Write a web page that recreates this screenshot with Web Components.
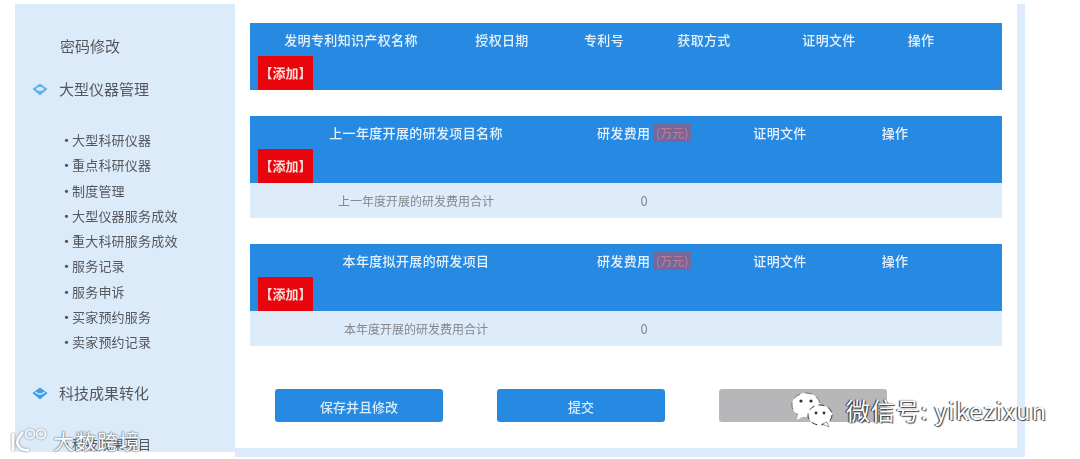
<!DOCTYPE html>
<html lang="zh">
<head>
<meta charset="utf-8">
<title>科研管理</title>
<style>
    html, body { margin: 0; height: 100%; background: #fff; overflow: hidden; }
    body { font-family: "Noto Sans CJK SC", "Noto Sans", sans-serif; }
</style>
</head>
<body>
<app-shell>
    <side-nav slot="nav"></side-nav>
    <data-table id="patents" columns="202px 100px 104px 96px 154px 30px"
        heads="发明专利知识产权名称|授权日期|专利号|获取方式|证明文件|操作"></data-table>
    <data-table id="lastYear" columns="332px 124px 148px 82px"
        heads="上一年度开展的研发项目名称|研发费用 (万元)|证明文件|操作"
        total="上一年度开展的研发费用合计|0"></data-table>
    <data-table id="thisYear" columns="332px 124px 148px 82px"
        heads="本年度拟开展的研发项目|研发费用 (万元)|证明文件|操作"
        total="本年度开展的研发费用合计|0"></data-table>
    <form-actions></form-actions>
</app-shell>
<water-marks></water-marks>

<script>
// Outer frame: sidebar on the left, white content panel with pale blue edge.
class AppShell extends HTMLElement {
    constructor() {
        super();
        this.attachShadow({ mode: "open" });
        this.shadowRoot.innerHTML = `
      <style>
        :host {
          display: grid;
          grid-template-columns: 220px 790px;
          width: 1010px;
          height: 453px;
          padding: 4px 0 0 15px;
        }
        .content {
          box-sizing: border-box;
          height: 453px;
          padding: 19px 15px 0 15px;
          border-right: 8px solid #deebfa;
          border-bottom: 9px solid #deebfa;
          background: #fff;
          display: flex;
          flex-direction: column;
          gap: 26px;
        }
      </style>
      <slot name="nav"></slot>
      <div class="content"><slot></slot></div>
    `;
    }
}

class SideNav extends HTMLElement {
    constructor() {
        super();
        this.attachShadow({ mode: "open" });
        const subItems = ["大型科研仪器", "重点科研仪器", "制度管理", "大型仪器服务成效", "重大科研服务成效",
            "服务记录", "服务申诉", "买家预约服务", "卖家预约记录"];
        const eye = (open) => `
          <svg viewBox="0 0 16 13" width="16" height="13" aria-hidden="true">
            <path d="M8 0.5 L15.5 6 L8 12.5 L0.5 6 Z" fill="${open ? "#5db3ea" : "#3f9fe2"}"/>
            ${open
                ? `<ellipse cx="8" cy="6" rx="3.6" ry="1.9" fill="#d5ecfa"/>`
                : `<path d="M3.5 5 Q8 9.5 12.5 5" fill="none" stroke="#d5ecfa" stroke-width="1.3"/>`}
          </svg>`;
        this.shadowRoot.innerHTML = `
      <style>
        :host {
          display: block;
          box-sizing: border-box;
          height: 448px;
          background: #dcebfa;
          overflow: hidden;
          padding-top: 31px;
          color: #55575c;
        }
        .top {
          display: flex;
          align-items: center;
          font-size: 15px;
          line-height: 22px;
          filter: blur(0.6px);
        }
        .top svg { margin-left: 17px; flex: none; }
        .top span { margin-left: 11px; }
        .top.plain span { margin-left: 45px; }
        .top.first { margin-top: 21px; }
        .top.second { margin-top: 28px; }
        ul {
          list-style: none;
          margin: 27px 0 0 0;
          padding: 0 0 0 45px;
          font-size: 13px;
          letter-spacing: 0.2px;
          line-height: 25.25px;
          filter: blur(0.6px);
        }
        li::before { content: "·"; display: inline-block; width: 12px; text-align: center; font-weight: 700; }
        ul.last { margin-top: 27px; }
      </style>
      <div class="top plain"><span>密码修改</span></div>
      <div class="top first">${eye(true)}<span>大型仪器管理</span></div>
      <ul>${subItems.map((t) => `<li>${t}</li>`).join("")}</ul>
      <div class="top second">${eye(false)}<span>科技成果转化</span></div>
      <ul class="last"><li>科技成果项目</li></ul>
    `;
    }
}

// A table head with an add button under it, and an optional total row.
class DataTable extends HTMLElement {
    constructor() {
        super();
        this.attachShadow({ mode: "open" });
    }

    connectedCallback() {
        this.render();
    }

    render() {
        const columns = this.getAttribute("columns");
        const heads = this.getAttribute("heads").split("|");
        const total = this.getAttribute("total");
        const headCell = (text) => {
            // The unit is marked like a selection in the source picture.
            const parts = text.split(" ");
            return parts.length > 1
                ? `<div>${parts[0]}<mark>${parts[1]}</mark></div>`
                : `<div>${text}</div>`;
        };
        this.shadowRoot.innerHTML = `
      <style>
        :host { display: block; }
        .grid { display: grid; grid-template-columns: ${columns}; text-align: center; }
        .head { background: #268ae2; height: 67px; }
        .titles {
          height: 33px;
          line-height: 34px;
          font-size: 13px;
          letter-spacing: 0.35px;
          font-weight: 500;
          color: #e6f1fb;
          filter: blur(0.6px);
          white-space: nowrap;
        }
        mark {
          background: #75689c;
          color: #bb7a92;
          font-size: 12px;
          letter-spacing: 0;
          margin-left: 3px;
          padding: 1px 2.5px;
        }
        .add {
          margin-left: 8px;
          width: 55px;
          height: 34px;
          background: #e8060c;
          color: #fbdcd8;
          font-size: 13px;
          line-height: 34px;
          text-align: center;
          font-weight: 700;
          white-space: nowrap;
        }
        .add span { display: block; filter: blur(0.5px); }
        .total {
          height: 35px;
          line-height: 35px;
          background: #deebfa;
          color: #85878b;
          font-size: 12px;
          filter: blur(0.5px);
        }
        .total div + div { font-size: 13px; }
      </style>
      <div class="head">
        <div class="grid titles">${heads.map(headCell).join("")}</div>
        <div class="add"><span>【添加】</span></div>
      </div>
      ${total ? `<div class="grid total">${total.split("|").map((t) => `<div>${t}</div>`).join("")}</div>` : ""}
    `;
    }
}

class FormActions extends HTMLElement {
    constructor() {
        super();
        this.attachShadow({ mode: "open" });
        this.shadowRoot.innerHTML = `
      <style>
        :host {
          display: flex;
          gap: 54px;
          margin: 17px 0 0 25px;
        }
        div {
          width: 168px;
          height: 33px;
          border-radius: 3px;
          background: #268ae2;
          color: #dcebfa;
          font-size: 13px;
          font-weight: 500;
          line-height: 35px;
          text-align: center;
        }
        span { filter: blur(0.6px); display: block; }
        .off { background: #b7b7b9; }
      </style>
      <div><span>保存并且修改</span></div>
      <div><span>提交</span></div>
      <div class="off"></div>
    `;
    }
}

// Logos stamped over the screenshot.
class WaterMarks extends HTMLElement {
    constructor() {
        super();
        this.attachShadow({ mode: "open" });
        this.shadowRoot.innerHTML = `
      <style>
        :host { position: absolute; inset: 0; pointer-events: none; overflow: hidden; }
        .left, .right { position: absolute; display: flex; align-items: center; white-space: nowrap; }
        .left { left: 9px; top: 425px; color: #fbfcfe; font-size: 21px; text-shadow: 0 0 2px #555a60, 0 0 1px #555a60; }
        .left svg { filter: drop-shadow(0 0 1px #7c8086); }
        .left b { font-weight: 400; margin-left: 5px; letter-spacing: 1px; }
        .right { left: 791px; top: 390px; font-size: 24px; letter-spacing: 0.9px; color: #fff; text-shadow: -1px 0 1px #222, 1px 1px 1px #444; }
        .right span { margin-left: 11px; }
      </style>
      <div class="left">
        <svg width="39" height="28" viewBox="0 0 39 28" fill="none" stroke="#fbfcfe" stroke-width="2.6">
          <path d="M4 7 V25 M14 6 Q6 15 9 19 Q12 25 20 24"/>
          <circle cx="21" cy="8" r="4.5" stroke-width="1.7"/>
          <circle cx="32" cy="8" r="4.5" stroke-width="1.7"/>
        </svg>
        <b>大数跨境</b>
      </div>
      <div class="right">
        <svg width="44" height="38" viewBox="0 0 44 38">
          <ellipse cx="15" cy="15" rx="14" ry="12" fill="#fff" stroke="#555" stroke-width="0.8" stroke-dasharray="7 5"/>
          <path d="M7 24 L6 30 L13 26 Z" fill="#fff"/>
          <circle cx="10" cy="11" r="1.6" fill="#333"/>
          <circle cx="20" cy="11" r="1.6" fill="#333"/>
          <ellipse cx="29" cy="25" rx="12" ry="10" fill="#fff" stroke="#333" stroke-width="1" stroke-dasharray="6 4"/>
          <path d="M36 32 L38 37 L31 34 Z" fill="#fff" stroke="#555" stroke-width="0.6"/>
          <circle cx="25" cy="23" r="1.4" fill="#333"/>
          <circle cx="33" cy="23" r="1.4" fill="#333"/>
        </svg>
        <span>微信号: yikezixun</span>
      </div>
    `;
    }
}

customElements.define("app-shell", AppShell);
customElements.define("side-nav", SideNav);
customElements.define("data-table", DataTable);
customElements.define("form-actions", FormActions);
customElements.define("water-marks", WaterMarks);
</script>
</body>
</html>
